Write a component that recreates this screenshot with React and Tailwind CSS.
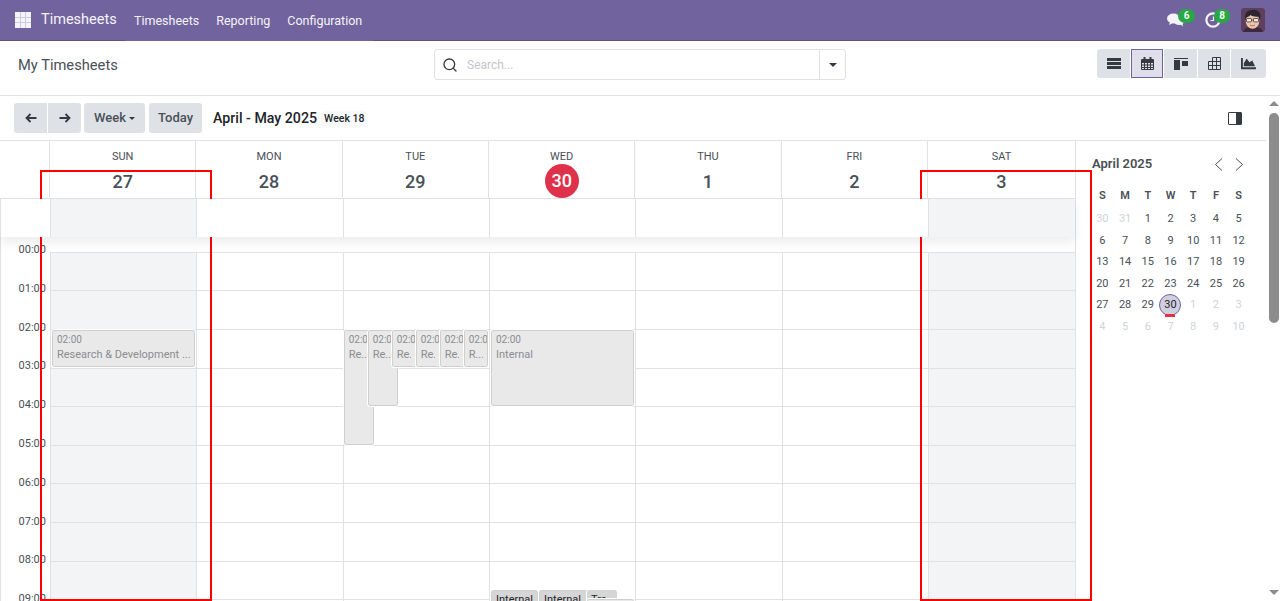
import React from 'react';
import { Search } from 'lucide-react';
import { FaChartArea } from 'react-icons/fa';

const DAYS = [
  { name: 'SUN', num: '27', off: true },
  { name: 'MON', num: '28' },
  { name: 'TUE', num: '29' },
  { name: 'WED', num: '30', today: true },
  { name: 'THU', num: '1' },
  { name: 'FRI', num: '2' },
  { name: 'SAT', num: '3', off: true },
];
const HOURS = ['00:00', '01:00', '02:00', '03:00', '04:00', '05:00', '06:00', '07:00', '08:00', '09:00'];
const MONTH = [
  ['30', '31', '1', '2', '3', '4', '5'],
  ['6', '7', '8', '9', '10', '11', '12'],
  ['13', '14', '15', '16', '17', '18', '19'],
  ['20', '21', '22', '23', '24', '25', '26'],
  ['27', '28', '29', '30', '1', '2', '3'],
  ['4', '5', '6', '7', '8', '9', '10'],
];

function AppsIcon() {
  return (
    <div className="grid grid-cols-3 gap-px w-4 h-4 mr-[10px] bg-[#cfc9e0]">
      {Array.from({ length: 9 }).map((_, i) => (
        <div key={i} className="bg-[#f4f3f8]" />
      ))}
    </div>
  );
}

function ChatIcon() {
  return (
    <svg width="17" height="14" viewBox="0 0 17 14" fill="#f4f3f8" className="block">
      <ellipse cx="6.500" cy="5.500" rx="6.500" ry="5" />
      <path d="M3 9l-1 3 4-2z" />
      <ellipse cx="12" cy="8.500" rx="5" ry="3.600" />
      <path d="M13 11l3 2.400-.6-3.400z" />
    </svg>
  );
}

function ClockIcon() {
  return (
    <svg width="16" height="16" viewBox="0 0 16 16" fill="none" stroke="#f4f3f8" className="block">
      <circle cx="8" cy="8" r="6.600" strokeWidth="2.200" />
      <path d="M8.500 4.500v4h-3" strokeWidth="1.200" />
    </svg>
  );
}

function Avatar() {
  return (
    <svg width="24" height="24" viewBox="0 0 24 24" className="rounded-[3px] block">
      <rect width="24" height="24" fill="#5f3f60" />
      <path d="M2 24c1-4 5-5 10-5s9 1 10 5z" fill="#3c2a3c" />
      <ellipse cx="11.500" cy="13" rx="6.800" ry="7.800" fill="#eec5ab" />
      <path d="M4.500 12C3 6 6 2 11 2c3-1 8 1 8.500 5 .3 2-.3 3.500-.8 5l-1-3.500c-3 .5-6 0-8.500-1.500-.5 1.500-2.500 2-3.500 2z" fill="#2b2530" />
      <rect x="5.500" y="10.500" width="5" height="3.400" rx=".6" fill="#fff" fillOpacity=".55" stroke="#3a3a3a" strokeWidth=".8" />
      <rect x="12.500" y="10.500" width="5" height="3.400" rx=".6" fill="#fff" fillOpacity=".55" stroke="#3a3a3a" strokeWidth=".8" />
      <path d="M10.500 12h2" stroke="#3a3a3a" strokeWidth=".7" />
      <path d="M9 17c1.500 1 3.500 1 5 0" stroke="#9a5a50" strokeWidth=".8" fill="none" />
    </svg>
  );
}

function Navbar() {
  return (
    <div className="flex h-[41px] text-[#f4f3f8] text-[12.500px]">
      <div className="flex items-center pl-[15px] w-[125px] bg-[#71639e] border-b border-[#5f5289]">
        <AppsIcon />
        <span className="text-[14.500px]">Timesheets</span>
      </div>
      <div className="flex items-center w-[248px] pl-[9px] pt-[2px] gap-[17px] bg-[#71639e] border-b border-[#71639e]">
        <span>Timesheets</span>
        <span>Reporting</span>
        <span>Configuration</span>
      </div>
      <div className="flex-1 flex items-center justify-end bg-[#71639e] border-b border-[#5f5289] pr-[15px]">
        <div className="relative mr-[21px]">
          <ChatIcon />
          <span className="absolute -top-[4px] left-[11px] w-[17px] h-[14px] rounded-full bg-[#28a745] text-[#f0fff0] text-[10px] font-bold leading-[14px] text-center">6</span>
        </div>
        <div className="relative mr-[20px]">
          <ClockIcon />
          <span className="absolute -top-[3px] left-[9px] w-[16px] h-[14px] rounded-full bg-[#28a745] text-[#f0fff0] text-[10px] font-bold leading-[14px] text-center">8</span>
        </div>
        <Avatar />
      </div>
    </div>
  );
}

function ViewBtn({ active, className, children }) {
  return (
    <div className={`h-full flex items-center justify-center text-[#343a40] ${active ? 'bg-[#e0deea] border border-[#71639e]' : 'bg-[#dee2e6]'} ${className}`}>
      {children}
    </div>
  );
}

function ControlPanel() {
  return (
    <div className="flex items-start h-[55px] border-b border-[#dee2e6] bg-white">
      <div className="w-[434px] pl-[18px] pt-[14px] text-[14.700px] leading-[20px] text-[#495057]">My Timesheets</div>
      <div className="w-[412px] h-[31px] mt-[8px] flex items-center border border-[#dee2e6] rounded-[3px]">
        <Search size={16} strokeWidth={2} className="ml-[7px] text-[#343a40]" />
        <span className="ml-[9px] flex-1 text-[12px] text-[#c3c6cc]">Search...</span>
        <div className="w-[26px] h-full border-l border-[#dee2e6] flex items-center justify-center">
          <div className="border-x-[4px] border-x-transparent border-t-[4px] border-t-[#343a40]" />
        </div>
      </div>
      <div className="ml-auto mr-[14px] mt-[8px] h-[29px] flex gap-px rounded-[3px] overflow-hidden">
        <ViewBtn className="w-[33px]">
          <div className="flex flex-col gap-[1px] w-[14px]">
            <div className="h-[3px] bg-[#343a40]" />
            <div className="h-[3px] bg-[#343a40]" />
            <div className="h-[3px] bg-[#343a40]" />
          </div>
        </ViewBtn>
        <ViewBtn active className="w-[32px]">
          <svg width="13" height="13" viewBox="0 0 13 13" fill="none" stroke="#343a40" strokeWidth="1">
            <path d="M.5 2.500h12v10H.5zM.5 5.500h12M.5 8h12M.5 10.500h12M3.500 5.500v7M6.500 5.500v7M9.500 5.500v7" />
            <path d="M1 3.500h11V5H1z" fill="#343a40" />
            <path d="M3.500 0v3M9.500 0v3" strokeWidth="2" />
          </svg>
        </ViewBtn>
        <ViewBtn className="w-[33px]">
          <div className="w-[14px] h-[12px] flex flex-col gap-[1px]">
            <div className="h-[1px] bg-[#343a40]" />
            <div className="flex-1 flex justify-between">
              <div className="w-[6px] h-full bg-[#343a40]" />
              <div className="w-[6px] h-[5px] mt-[1px] bg-[#343a40]" />
            </div>
          </div>
        </ViewBtn>
        <ViewBtn className="w-[32px]">
          <svg width="13" height="13" viewBox="0 0 13 13" fill="none" stroke="#343a40" strokeWidth="1">
            <path d="M4.500 .5h8v12H.5V4.500h12M.5 8.500h12M4.500 .5v12M8.500 .5v12" />
          </svg>
        </ViewBtn>
        <ViewBtn className="w-[35px]"><FaChartArea size={15} /></ViewBtn>
      </div>
    </div>
  );
}

function ToolBtn({ className, children }) {
  return (
    <div className={`h-[30px] flex items-center justify-center bg-[#dee2e6] text-[13px] font-medium text-[#495057] ${className}`}>
      {children}
    </div>
  );
}

function Arrow({ flip }) {
  return (
    <svg width="12" height="10" viewBox="0 0 12 10" fill="none" stroke="#343a40" strokeWidth="1.800" className={flip ? 'rotate-180' : ''}>
      <path d="M11.500 5H1.500M5.500 1L1.500 5l4 4" />
    </svg>
  );
}

function Toolbar() {
  return (
    <div className="flex items-center h-[45px] pl-[14px] border-b border-[#dee2e6] bg-white">
      <ToolBtn className="w-[33px] rounded-l-[3px]"><Arrow /></ToolBtn>
      <ToolBtn className="w-[33px] ml-px rounded-r-[3px]"><Arrow flip /></ToolBtn>
      <ToolBtn className="w-[61px] ml-[3px] rounded-[3px] gap-[3px]">
        Week
        <span className="border-x-[3px] border-x-transparent border-t-[3px] border-t-[#343a40]" />
      </ToolBtn>
      <ToolBtn className="w-[53px] ml-[4px] rounded-[3px]">Today</ToolBtn>
      <span className="ml-[11px] pt-[2px] text-[14.200px] font-medium text-[#212529]">April - May 2025</span>
      <span className="ml-[4px] mt-[1px] px-[3px] h-[16px] flex items-center rounded-[3px] bg-[#f8f9fa] text-[10.500px] font-medium text-[#212529]">Week 18</span>
      <div className="ml-auto mr-[24px] w-[14px] h-[13px] flex border border-[#343a40] rounded-[1px]">
        <div className="flex-1 bg-white" />
        <div className="w-[5px] bg-[#343a40]" />
      </div>
    </div>
  );
}

function DayHeader() {
  return (
    <div className="flex h-[58px] border-b border-[#dee2e6]">
      <div className="w-[49px] shrink-0" />
      {DAYS.map((d, i) => (
        <div key={d.name} className={`border-l border-[#dee2e6] flex flex-col items-center text-[#495057] ${i === 6 ? 'w-[148px]' : 'flex-1'}`}>
          <span className="text-[11px] leading-[14px] mt-[9px]">{d.name}</span>
          {d.today ? (
            <span className="w-[34px] h-[34px] rounded-full bg-[#e0314b] text-white text-[18px] font-medium leading-[34px] text-center">{d.num}</span>
          ) : (
            <span className="mt-[5px] text-[18px] font-medium leading-[26px]">{d.num}</span>
          )}
        </div>
      ))}
    </div>
  );
}

function AllDayRow() {
  return (
    <div className="relative z-10 flex h-[38px] border-l border-[#dee2e6] bg-white shadow-[0_6px_10px_rgba(0,0,0,0.07)]">
      <div className="w-[49px] shrink-0" />
      {DAYS.map((d, i) => (
        <div key={d.name} className={`border-l border-[#dee2e6] ${i === 6 ? 'w-[147px]' : 'flex-1'} ${d.off ? 'bg-[#f3f4f6]' : ''}`} />
      ))}
    </div>
  );
}

function Event({ className, time, title, children }) {
  return (
    <div className={`absolute overflow-hidden rounded-[2px] bg-[#e9e9e9] border border-[#cfcfcf] outline outline-1 outline-white px-[4px] text-[#8a8d91] ${className}`}>
      {children || (
        <>
          <div className="text-[10px] leading-[13px] mt-[2px] whitespace-nowrap">{time}</div>
          <div className="text-[11px] leading-[14px] mt-[2px] whitespace-nowrap overflow-hidden">{title}</div>
        </>
      )}
    </div>
  );
}

function TimeGrid() {
  return (
    <div className="flex flex-1 border-l border-[#dee2e6] overflow-hidden">
      <div className="w-[49px] shrink-0 pt-[6px]">
        {HOURS.map((h) => (
          <div key={h} className="h-[38.800px] pr-[4px] text-right text-[11px] leading-[14px] text-[#495057]">{h}</div>
        ))}
      </div>
      {DAYS.map((d, i) => (
        <div key={d.name} className={`relative pt-[14.600px] ${i === 6 ? 'w-[147px]' : 'flex-1'}`}>
          {HOURS.map((h) => (
            <div key={h} className={`h-[38.650px] border-t border-l border-[#dee2e6] ${d.off ? 'bg-[#f3f4f6]' : ''}`} />
          ))}
          {i === 0 && <Event className="top-[93px] left-[2px] right-[1px] h-[37px]" time="02:00" title="Research & Development ..." />}
          {i === 2 && (
            <>
              <Event className="top-[93px] left-[1px] w-[30px] h-[115px]" time="02:00" title="Re..." />
              <Event className="top-[93px] left-[25px] w-[30px] h-[76px]" time="02:00" title="Re..." />
              <Event className="top-[93px] left-[49px] w-[24px] h-[37px]" time="02:00" title="Re..." />
              <Event className="top-[93px] left-[73px] w-[24px] h-[37px]" time="02:00" title="Re..." />
              <Event className="top-[93px] left-[97px] w-[24px] h-[37px]" time="02:00" title="Re..." />
              <Event className="top-[93px] left-[121px] w-[24px] h-[37px]" time="02:00" title="R..." />
            </>
          )}
          {i === 3 && (
            <>
              <Event className="top-[93px] left-[2px] right-[1px] h-[76px]" time="02:00" title="Internal" />
              <Event className="top-[353px] left-[2px] w-[47px] h-[40px] !bg-[#d6d6d6]">
                <div className="text-[11px] leading-[14px] mt-[2px] text-[#212529]">Internal</div>
              </Event>
              <Event className="top-[353px] left-[50px] w-[77px] h-[40px] !bg-[#d6d6d6]">
                <div className="text-[11px] leading-[14px] mt-[2px] text-[#212529]">Internal</div>
              </Event>
              <Event className="top-[353px] left-[98px] w-[30px] h-[40px] !bg-[#d6d6d6] !border-0">
                <div className="text-[11px] leading-[14px] mt-[3px] text-[#212529]">Tra</div>
              </Event>
              <Event className="top-[362px] left-[98px] w-[47px] h-[30px]" />
            </>
          )}
        </div>
      ))}
    </div>
  );
}

function Sidebar() {
  return (
    <div className="w-[191px] shrink-0 border-l border-[#dee2e6] bg-white pl-[15px] pr-[16px]">
      <div className="flex items-center justify-between h-[20px] mt-[13px]">
        <span className="ml-px text-[13px] font-semibold text-[#495057]">April 2025</span>
        <div className="flex gap-[12px] mr-[6px]">
          <svg width="9" height="13" viewBox="0 0 9 13" fill="none" stroke="#495057"><path d="M8 .5L1.500 6.500 8 12.500" /></svg>
          <svg width="9" height="13" viewBox="0 0 9 13" fill="none" stroke="#495057"><path d="M1 .5l6.500 6L1 12.500" /></svg>
        </div>
      </div>
      <div className="grid grid-cols-7 mt-[11px] text-[11px] text-center text-[#495057]">
        {['S', 'M', 'T', 'W', 'T', 'F', 'S'].map((s, i) => (
          <div key={i} className="h-[23px] leading-[22px] font-semibold">{s}</div>
        ))}
        {MONTH.map((week, w) =>
          week.map((n, i) => {
            const muted = (w === 0 && i < 2) || (w === 4 && i > 3) || w === 5;
            const today = w === 4 && i === 3;
            return (
              <div key={`${w}-${i}`} className="relative h-[21.600px] leading-[21.600px] flex items-center justify-center">
                {today ? (
                  <>
                    <span className="w-[22px] h-[22px] rounded-full bg-[#d0cfdf] border border-[#71639e] leading-[20px] text-[#212529]">{n}</span>
                    <span className="absolute -bottom-[1px] left-1/2 -translate-x-1/2 w-[10px] h-[3px] bg-[#e0314b]" />
                  </>
                ) : (
                  <span className={muted ? 'text-[#ced4da]' : ''}>{n}</span>
                )}
              </div>
            );
          })
        )}
      </div>
    </div>
  );
}

function Scrollbar() {
  return (
    <div className="w-[14px] shrink-0 bg-white flex flex-col items-center pl-[2px]">
      <div className="mt-[5px] border-x-[5px] border-x-transparent border-b-[5px] border-b-[#8c8c8c]" />
      <div className="mt-[7px] w-[10px] h-[210px] rounded-[5px] bg-[#8c8c8c]" />
      <div className="mt-auto mb-[6px] border-x-[5px] border-x-transparent border-t-[5px] border-t-[#8c8c8c]" />
    </div>
  );
}

export default function App() {
  return (
    <div className="relative w-[1280px] h-[601px] overflow-hidden bg-white font-['Roboto',sans-serif]">
      <Navbar />
      <ControlPanel />
      <div className="flex h-[505px]">
        <div className="flex-1 min-w-0 flex flex-col">
          <Toolbar />
          <div className="flex flex-1 min-h-0">
            <div className="flex-1 min-w-0 flex flex-col">
              <DayHeader />
              <AllDayRow />
              <TimeGrid />
            </div>
            <Sidebar />
          </div>
        </div>
        <Scrollbar />
      </div>
      {/* red annotation boxes */}
      <div className="absolute left-[40px] top-[170px] w-[172px] h-[431px] border-2 border-[#f00]" />
      <div className="absolute left-[920px] top-[170px] w-[172px] h-[431px] border-2 border-[#f00]" />
    </div>
  );
}
